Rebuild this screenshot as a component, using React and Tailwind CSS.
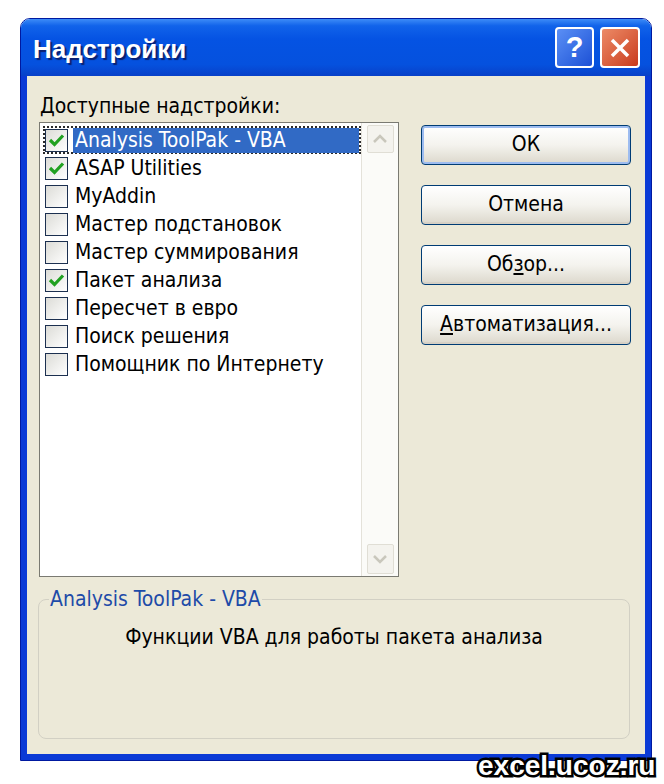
import React from 'react';

const items = [
  { label: 'Analysis ToolPak - VBA', checked: true, selected: true },
  { label: 'ASAP Utilities', checked: true },
  { label: 'MyAddin' },
  { label: 'Мастер подстановок' },
  { label: 'Мастер суммирования' },
  { label: 'Пакет анализа', checked: true },
  { label: 'Пересчет в евро' },
  { label: 'Поиск решения' },
  { label: 'Помощник по Интернету' },
];

const font = "font-['DejaVu_Sans_Condensed','Liberation_Sans',sans-serif]";

function CheckBox({ checked }) {
  return (
    <div className="w-[23px] h-[23px] shrink-0 border border-[#1c3050] bg-gradient-to-br from-[#dcdcd7] to-white flex items-center justify-center">
      {checked && (
        <svg width="19" height="19" viewBox="0 0 19 19">
          <path d="M3 9 L7.5 13.5 L16 4.5" fill="none" stroke="#21a121" strokeWidth="3.2" />
        </svg>
      )}
    </div>
  );
}

function Chevron({ up }) {
  return (
    <svg width="16" height="10" viewBox="0 0 16 10">
      <path d={up ? 'M2 8 L8 2 L14 8' : 'M2 2 L8 8 L14 2'} fill="none" stroke="#c9c7bc" strokeWidth="2.5" />
    </svg>
  );
}

function XpButton({ children, primary }) {
  return (
    <div
      className={
        'h-[40px] rounded-[4px] border border-[#003c74] bg-gradient-to-b from-white via-[#f4f3ee] to-[#dcd8cc] flex items-center justify-center text-[21px] text-black ' +
        (primary ? 'shadow-[inset_0_0_0_2px_#9dbcf0]' : 'shadow-[inset_0_-2px_0_#d6d0c5]')
      }
    >
      {children}
    </div>
  );
}

export default function App() {
  return (
    <div className={`relative w-[664px] h-[784px] overflow-hidden bg-white pl-5 pt-[18px] ${font}`}>
      <div className="w-[632px] h-[743px] flex flex-col rounded-t-[10px] border border-[#0019a0] overflow-hidden">
        {/* title bar */}
        <div className="h-[57px] shrink-0 flex items-center pl-[12px] pr-[11px] bg-[linear-gradient(to_bottom,#3d8cf7_0%,#1163ea_12%,#0553e3_35%,#0551de_80%,#0840c8_100%)]">
          <div className="flex-1 pt-[3px] text-white text-[26px] font-bold font-['Liberation_Sans',sans-serif] [text-shadow:2px_2px_1px_#0a2070]">
            Надстройки
          </div>
          <div className="w-[39px] h-[41px] rounded-[4px] border-2 border-white bg-gradient-to-br from-[#5b8ff5] to-[#1d50d6] flex items-center justify-center text-white text-[29px] font-bold font-['Liberation_Sans',sans-serif]">
            ?
          </div>
          <div className="ml-[6px] w-[40px] h-[41px] rounded-[4px] border-2 border-white bg-gradient-to-br from-[#ec8a66] to-[#c9391a] flex items-center justify-center">
            <svg width="22" height="22" viewBox="0 0 22 22">
              <path d="M3 3 L19 19 M19 3 L3 19" stroke="white" strokeWidth="3.5" />
            </svg>
          </div>
        </div>

        {/* body */}
        <div className="flex-1 flex flex-col bg-[#ece9d8] border-x-[6px] border-b-[6px] border-[#0a3ad6]">
          <div className="flex pt-[18px]">
            <div className="ml-[12px] w-[360px]">
              <div className="h-[24px] leading-[24px] mb-[4px] pl-[1px] text-[21px] text-black">
                <span className="underline">Д</span>оступные надстройки:
              </div>
              <div className="h-[455px] border border-[#7a7a72] bg-white flex">
                <div className="w-[321px] pl-[3px] pt-[3px]">
                  {items.map((it) => (
                    <div
                      key={it.label}
                      className={
                        'h-[28px] w-[318px] flex items-center border-2 ' +
                        (it.selected ? 'border-dotted border-[#2a2a2a]' : 'border-transparent')
                      }
                    >
                      <CheckBox checked={it.checked} />
                      <div
                        className={
                          'ml-[5px] flex-1 h-[25px] leading-[25px] pl-[2px] text-[21px] whitespace-nowrap ' +
                          (it.selected ? 'bg-[#316ac5] text-white' : 'text-black')
                        }
                      >
                        {it.label}
                      </div>
                    </div>
                  ))}
                </div>
                <div className="flex-1 border-l border-[#e4e2da] bg-[#fbfbf8] flex flex-col justify-between items-center py-[2px]">
                  <div className="w-[27px] h-[28px] border border-[#e0ded5] rounded-[2px] bg-[#f4f3ee] flex items-center justify-center">
                    <Chevron up />
                  </div>
                  <div className="w-[27px] h-[30px] border border-[#e0ded5] rounded-[2px] bg-[#f4f3ee] flex items-center justify-center">
                    <Chevron />
                  </div>
                </div>
              </div>
            </div>

            <div className="ml-[22px] w-[210px] pt-[31px] flex flex-col gap-[20px]">
              <XpButton primary>ОК</XpButton>
              <XpButton>Отмена</XpButton>
              <XpButton>
                <span>
                  Об<span className="underline">з</span>ор...
                </span>
              </XpButton>
              <XpButton>
                <span>
                  <span className="underline">А</span>втоматизация...
                </span>
              </XpButton>
            </div>
          </div>

          <fieldset className="ml-[11px] mt-[11px] w-[592px] h-[151px] rounded-[8px] border border-[#d2d0c4] px-[10px]">
            <legend className="px-[1px] text-[21px] leading-[22px] text-[#1e4ba8]">Analysis ToolPak - VBA</legend>
            <div className="mt-[15px] text-center text-[21px] leading-[24px] text-black">
              Функции VBA для работы пакета анализа
            </div>
          </fieldset>
        </div>
      </div>

      <div className="absolute left-[478px] top-[752px] leading-[28px] text-[28px] font-bold text-white font-['Liberation_Sans',sans-serif] [paint-order:stroke_fill] [-webkit-text-stroke:5px_black]">
        excel.ucoz.ru
      </div>
    </div>
  );
}
